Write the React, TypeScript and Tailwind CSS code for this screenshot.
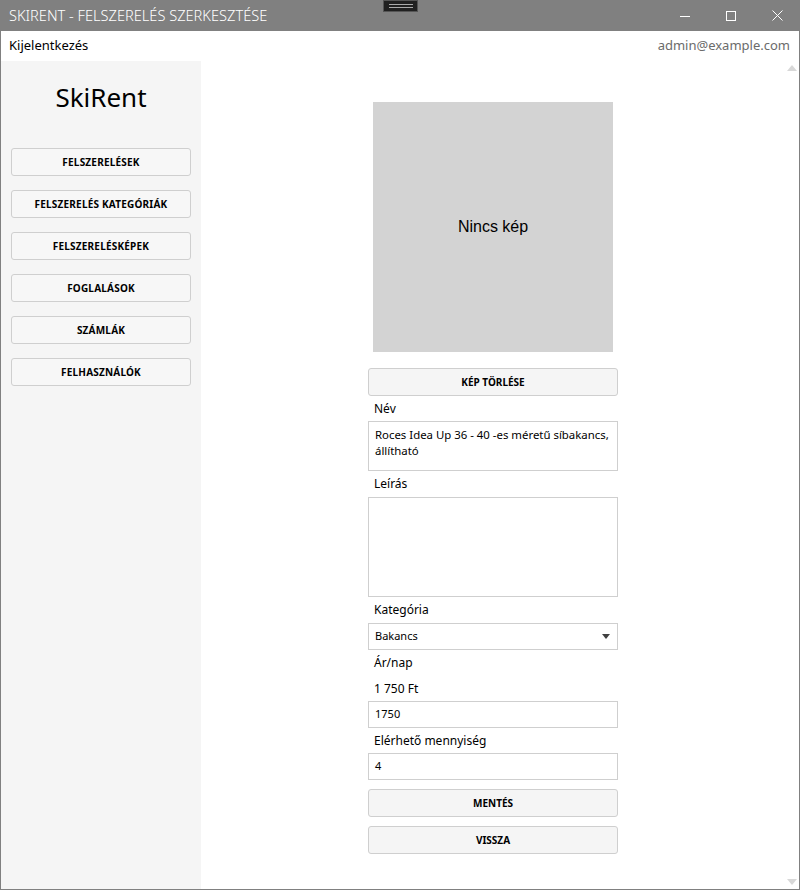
import React from "react";

const font = { fontFamily: '"Segoe UI", "Noto Sans", "Open Sans", sans-serif' };

function NavButton({ label }: { label: string }) {
  return (
    <button className="h-[28px] w-[180px] rounded-[3px] border border-[#cfcfcf] bg-[#f7f7f7] text-[10px] font-bold tracking-[0.2px] text-black">
      {label}
    </button>
  );
}

function FormButton({ label, className = "" }: { label: string; className?: string }) {
  return (
    <button
      className={`h-[28px] w-[250px] shrink-0 rounded-[3px] border border-[#cfcfcf] bg-[#f5f5f5] text-[10px] font-bold text-black ${className}`}
    >
      {label}
    </button>
  );
}

function Label({ children, h = "h-[25px]" }: { children: React.ReactNode; h?: string }) {
  return <div className={`flex shrink-0 items-center px-[6px] text-[12px] text-black ${h}`}>{children}</div>;
}

function Input({ value }: { value: string }) {
  return (
    <div className="flex h-[27px] w-[250px] shrink-0 items-center border border-[#cfcfcf] px-[6px] text-[11px] text-black">
      {value}
    </div>
  );
}

export default function App() {
  const nav = [
    "FELSZERELÉSEK",
    "FELSZERELÉS KATEGÓRIÁK",
    "FELSZERELÉSKÉPEK",
    "FOGLALÁSOK",
    "SZÁMLÁK",
    "FELHASZNÁLÓK",
  ];

  return (
    <div className="flex h-[890px] w-[800px] flex-col overflow-hidden bg-[#808080]" style={font}>
      {/* title bar */}
      <div className="relative flex h-[31px] shrink-0 items-center justify-between pl-[9px] text-white">
        <div className="text-[14.6px] font-light">SKIRENT - FELSZERELÉS SZERKESZTÉSE</div>
        <div className="absolute left-[383px] top-0 flex h-[12px] w-[35px] flex-col items-center justify-center gap-[2px] border border-[#555] bg-[#202020]">
          <div className="h-px w-[24px] bg-[#aaa]" />
          <div className="h-px w-[24px] bg-[#aaa]" />
        </div>
        <div className="flex h-full items-center">
          <div className="flex h-full w-[46px] items-center justify-center">
            <svg width="10" height="10" viewBox="0 0 10 10"><path d="M0 5.5h10" stroke="white" strokeWidth="1" /></svg>
          </div>
          <div className="flex h-full w-[46px] items-center justify-center">
            <svg width="10" height="10" viewBox="0 0 10 10"><rect x="0.5" y="0.5" width="9" height="9" fill="none" stroke="white" strokeWidth="1" /></svg>
          </div>
          <div className="flex h-full w-[46px] items-center justify-center">
            <svg width="11" height="11" viewBox="0 0 11 11"><path d="M0.5 0.5l10 10M10.5 0.5l-10 10" stroke="white" strokeWidth="1" /></svg>
          </div>
        </div>
      </div>

      <div className="mx-px mb-px flex flex-1 flex-col bg-white">
        {/* menu row */}
        <div className="flex h-[30px] shrink-0 items-center justify-between pl-[8px] pr-[9px]">
          <div className="text-[13px] text-black">Kijelentkezés</div>
          <div className="text-[13px] text-[#6b6b6b]">admin@example.com</div>
        </div>

        <div className="flex flex-1">
          {/* sidebar */}
          <div className="flex w-[200px] shrink-0 flex-col items-center bg-[#f5f5f5] pt-[18px]">
            <div className="text-[26px] leading-[36px] text-black">SkiRent</div>
            <div className="mt-[33px] flex flex-col gap-[14px]">
              {nav.map((n) => (
                <NavButton key={n} label={n} />
              ))}
            </div>
          </div>

          {/* content */}
          <div className="flex flex-1 justify-center pt-[41px]">
            <div className="flex w-[250px] flex-col">
              <div className="mx-auto flex h-[250px] w-[240px] shrink-0 items-center justify-center bg-[#d3d3d3]">
                <span className="text-[16px] text-black" style={{ fontFamily: '"Liberation Sans", Arial, sans-serif' }}>
                  Nincs kép
                </span>
              </div>
              <FormButton label="KÉP TÖRLÉSE" className="mt-[16px]" />
              <Label>Név</Label>
              <div className="h-[50px] w-[250px] shrink-0 border border-[#cfcfcf] px-[6px] py-[5px] text-[11.4px] leading-[16px] text-black">
                Roces Idea Up 36 - 40 -es méretű síbakancs, állítható
              </div>
              <Label h="h-[26px]">Leírás</Label>
              <div className="h-[100px] w-[250px] shrink-0 border border-[#cfcfcf]" />
              <Label h="h-[26px]">Kategória</Label>
              <div className="flex h-[27px] w-[250px] shrink-0 items-center justify-between border border-[#cfcfcf] pl-[6px] pr-[7px] text-[11px] text-black">
                <span>Bakancs</span>
                <svg width="8" height="5" viewBox="0 0 8 5"><path d="M0 0h8L4 5z" fill="#404040" /></svg>
              </div>
              <Label h="h-[26px]">Ár/nap</Label>
              <Label>1 750 Ft</Label>
              <Input value="1750" />
              <Label>Elérhető mennyiség</Label>
              <Input value="4" />
              <FormButton label="MENTÉS" className="mt-[9px]" />
              <FormButton label="VISSZA" className="mt-[9px]" />
            </div>
          </div>

          {/* scrollbar */}
          <div className="flex w-[14px] shrink-0 flex-col items-center justify-between py-[4px]">
            <svg width="10" height="6" viewBox="0 0 10 6"><path d="M0 6L5 0l5 6z" fill="#d8d8d8" /></svg>
            <svg width="10" height="6" viewBox="0 0 10 6"><path d="M0 0h10L5 6z" fill="#d8d8d8" /></svg>
          </div>
        </div>
      </div>
    </div>
  );
}
